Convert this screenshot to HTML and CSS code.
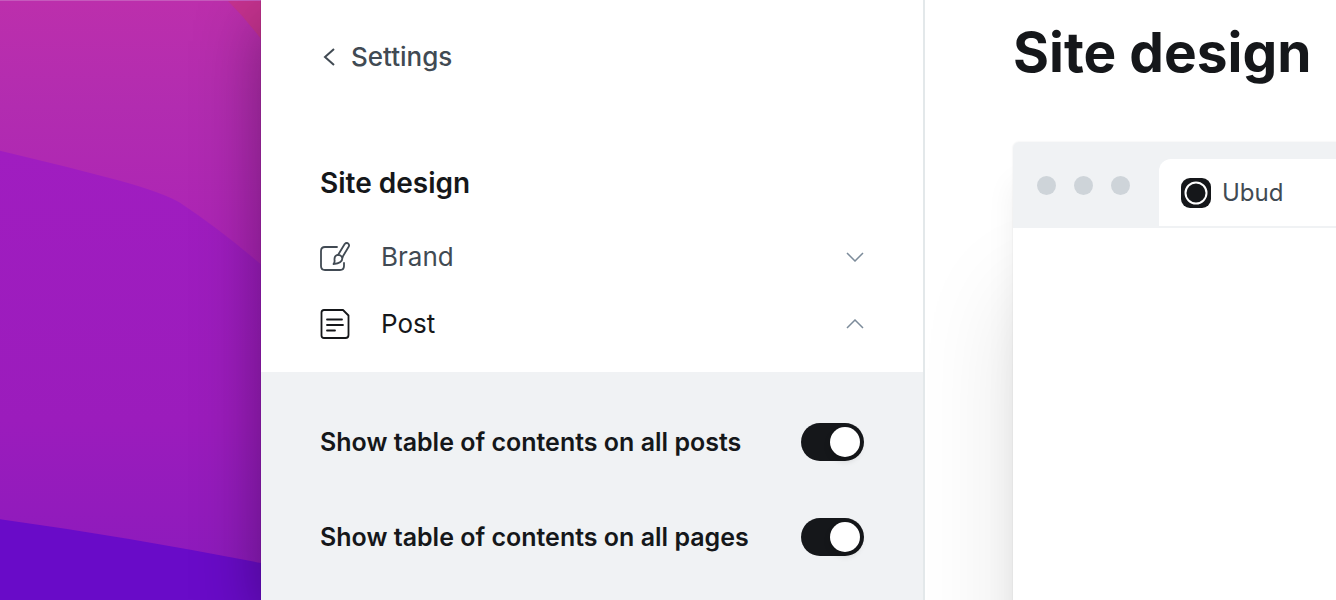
FILE: index.html
```html
<!DOCTYPE html>
<html lang="en">
<head>
    <meta charset="UTF-8">
    <meta name="viewport" content="width=device-width, initial-scale=1.0">
    <title>Site design - Settings</title>
    <link rel="stylesheet" href="styles.css">
</head>
<body>
    <div class="desktop">
        <!-- Wallpaper -->
        <div class="wallpaper">
            <svg viewBox="0 0 261 600" preserveAspectRatio="none" aria-hidden="true">
                <defs>
                    <linearGradient id="pink" x1="0" y1="0" x2="0" y2="1">
                        <stop offset="0" stop-color="#bc2fac"/>
                        <stop offset="0.4" stop-color="#b22cb0"/>
                        <stop offset="1" stop-color="#ab23b6"/>
                    </linearGradient>
                    <linearGradient id="purple" x1="0" y1="0" x2="0" y2="1">
                        <stop offset="0" stop-color="#a01dc0"/>
                        <stop offset="0.6" stop-color="#9b1cbc"/>
                        <stop offset="1" stop-color="#8a1abc"/>
                    </linearGradient>
                </defs>
                <rect width="261" height="265" fill="url(#pink)"/>
                <path d="M228 0H261V38Q246 18 228 0Z" fill="#c5328f"/>
                <path d="M0 150L66 166L120 180Q163 192 180 202Q222 230 261 264V600H0Z" fill="url(#purple)"/>
                <path d="M0 519Q130 537 261 563V600H0Z" fill="#690bc8"/>
            </svg>
        </div>

        <div class="window">
            <!-- Sidebar -->
            <aside class="sidebar">
                <a class="back" href="#">
                    <svg class="back-icon" viewBox="0 0 12 18" aria-hidden="true"><path d="M11 1L2 9L11 17"/></svg>
                    Settings
                </a>

                <h2>Site design</h2>

                <button class="section" type="button" aria-expanded="false">
                    <svg class="section-icon" viewBox="0 0 30 30" aria-hidden="true">
                        <path d="M17 5H5Q1 5 1 9V24Q1 28 5 28H20Q24 28 24 24V21"/>
                        <path d="M18 13L24.700 2Q26 0.500 27.800 1.200Q29.700 2.500 28.800 4.500L22.200 15.500"/>
                        <path d="M17 13Q20.500 12.500 22.500 15.500Q22.300 21.500 13.500 22Q15 20 14.500 18Q14.200 14 17 13Z"/>
                    </svg>
                    <span>Brand</span>
                    <svg class="chevron" viewBox="0 0 18 10" aria-hidden="true"><path d="M1 1L9 9L17 1"/></svg>
                </button>
                <button class="section active" type="button" aria-expanded="true">
                    <svg class="section-icon" viewBox="0 0 30 30" aria-hidden="true">
                        <path d="M4 1H23L28.500 6.500V26Q28.500 29 25.500 29H4Q1.500 29 1.500 26.500V3.500Q1.500 1 4 1Z"/>
                        <path d="M7 10.500H22M7 16H23M7 21.500H15"/>
                    </svg>
                    <span>Post</span>
                    <svg class="chevron" viewBox="0 0 18 10" aria-hidden="true"><path d="M1 9L9 1L17 9"/></svg>
                </button>

                <div class="options">
                    <label class="option" for="toc-posts">
                        Show table of contents on all posts
                        <input class="toggle" type="checkbox" id="toc-posts" checked>
                    </label>
                    <label class="option" for="toc-pages">
                        Show table of contents on all pages
                        <input class="toggle" type="checkbox" id="toc-pages" checked>
                    </label>
                </div>
            </aside>

            <!-- Preview -->
            <main class="content">
                <h1>Site design</h1>
                <div class="preview">
                    <div class="preview-bar">
                        <div class="dots"><i></i><i></i><i></i></div>
                        <div class="tab">
                            <svg class="tab-icon" viewBox="0 0 30 30" aria-hidden="true">
                                <rect width="30" height="30" rx="9" fill="#15171a"/>
                                <circle cx="15" cy="15" r="10.500" fill="none" stroke="#fff" stroke-width="2"/>
                            </svg>
                            <span>Ubud</span>
                        </div>
                    </div>
                </div>
            </main>
        </div>
    </div>
</body>
</html>
```
FILE: styles.css
```css
:root {
    --black: #15171a;
    --gray: #414a53;
    --gray-mid: #7c8b9a;
    --gray-light: #f0f2f4;
    --border: #e3e8ea;
}

* {
    margin: 0;
    padding: 0;
    box-sizing: border-box;
}

body {
    font-family: Inter, "Liberation Sans", sans-serif;
    font-size: 24px;
    line-height: 32px;
    color: var(--black);
    background: #fff;
}

.desktop {
    display: flex;
    height: 100vh;
    overflow: hidden;
}

.wallpaper {
    flex: none;
    width: 261px;
    border-top: 1px solid #c65abd;
}

.wallpaper svg {
    display: block;
    width: 100%;
    height: 100%;
}

.window {
    flex: 1;
    display: flex;
    min-width: 0;
    background: #fff;
    box-shadow: 0 0 1px rgba(0, 0, 0, 0.3), 0 20px 60px rgba(0, 0, 0, 0.35);
}

/* Sidebar */
.sidebar {
    flex: none;
    display: flex;
    flex-direction: column;
    width: 664px;
    padding-top: 41px;
    border-right: 2px solid var(--border);
}

.back {
    display: flex;
    align-items: center;
    gap: 16px;
    padding: 0 62px;
    color: var(--gray);
    font-size: 26px;
    font-weight: 500;
    text-decoration: none;
}

.back-icon {
    width: 12px;
    height: 18px;
    fill: none;
    stroke: currentColor;
    stroke-width: 2;
}

.sidebar h2 {
    margin: 94px 59px 24px;
    font-size: 28px;
    line-height: 32px;
    font-weight: 600;
}

.section {
    flex: none;
    display: flex;
    align-items: center;
    width: 100%;
    height: 67px;
    padding: 0 59px;
    border: none;
    background: none;
    color: var(--gray);
    font: inherit;
    font-size: 26px;
    text-align: left;
    cursor: pointer;
}

.section.active {
    color: var(--black);
}

.section span {
    flex: 1;
    padding-left: 31px;
}

.section-icon {
    width: 30px;
    height: 30px;
    fill: none;
    stroke: currentColor;
    stroke-width: 1.8;
    stroke-linecap: round;
    stroke-linejoin: round;
}

.chevron {
    width: 18px;
    height: 10px;
    fill: none;
    stroke: var(--gray-mid);
    stroke-width: 1.5;
}

.options {
    flex: 1;
    margin-top: 15px;
    padding: 22px 59px;
    background: var(--gray-light);
}

.option {
    display: flex;
    align-items: center;
    justify-content: space-between;
    height: 95px;
    font-size: 25px;
    font-weight: 600;
    white-space: nowrap;
    cursor: pointer;
}

.toggle {
    appearance: none;
    display: flex;
    align-items: center;
    justify-content: flex-start;
    width: 63px;
    height: 38px;
    padding: 4px;
    border-radius: 19px;
    background: #ced4d9;
    cursor: pointer;
}

.toggle::before {
    content: "";
    width: 30px;
    height: 30px;
    border-radius: 50%;
    background: #fff;
    box-shadow: 0 4px 6px rgba(0, 0, 0, 0.15);
}

.toggle:checked {
    justify-content: flex-end;
    background: var(--black);
}

/* Preview */
.content {
    flex: 1;
    min-width: 0;
    padding: 16px 0 0 88px;
    overflow: hidden;
}

.content h1 {
    font-size: 55px;
    line-height: 72px;
    font-weight: 700;
    white-space: nowrap;
}

.preview {
    width: 1200px;
    height: 900px;
    margin-top: 54px;
    border-radius: 6px;
    background: #fff;
    box-shadow: 0 0 2px rgba(0, 0, 0, 0.1), 0 40px 30px rgba(0, 0, 0, 0.06), 0 150px 100px rgba(0, 0, 0, 0.11);
}

.preview-bar {
    display: flex;
    height: 86px;
    padding-top: 17px;
    border-bottom: 2px solid var(--gray-light);
    border-radius: 6px 6px 0 0;
    background: var(--gray-light);
}

.dots {
    display: flex;
    gap: 18px;
    padding: 17px 29px 0 24px;
}

.dots i {
    width: 19px;
    height: 19px;
    border-radius: 50%;
    background: #ced4d9;
}

.tab {
    flex: 1;
    display: flex;
    align-items: center;
    gap: 11px;
    padding-left: 22px;
    border-radius: 12px 0 0 0;
    background: #fff;
    color: var(--gray);
}

.tab-icon {
    width: 30px;
    height: 30px;
}
```
